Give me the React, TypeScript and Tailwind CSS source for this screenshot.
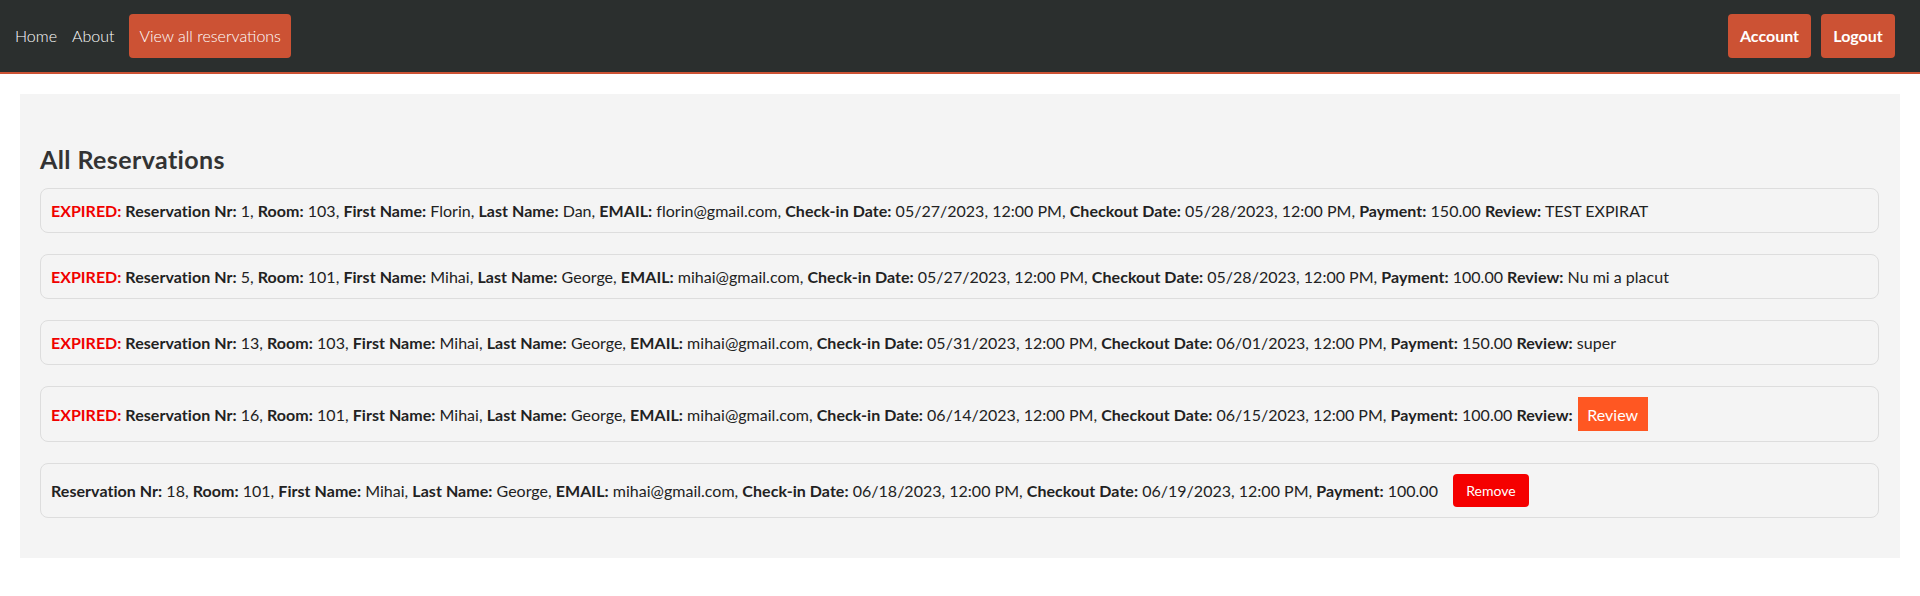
import React from "react";

type Field = { label: string; value: string };

const rows: { expired: boolean; fields: Field[]; action?: "review" | "remove" }[] = [
  {
    expired: true,
    fields: [
      { label: "Reservation Nr:", value: "1," },
      { label: "Room:", value: "103," },
      { label: "First Name:", value: "Florin," },
      { label: "Last Name:", value: "Dan," },
      { label: "EMAIL:", value: "florin@gmail.com," },
      { label: "Check-in Date:", value: "05/27/2023, 12:00 PM," },
      { label: "Checkout Date:", value: "05/28/2023, 12:00 PM," },
      { label: "Payment:", value: "150.00" },
      { label: "Review:", value: "TEST EXPIRAT" },
    ],
  },
  {
    expired: true,
    fields: [
      { label: "Reservation Nr:", value: "5," },
      { label: "Room:", value: "101," },
      { label: "First Name:", value: "Mihai," },
      { label: "Last Name:", value: "George," },
      { label: "EMAIL:", value: "mihai@gmail.com," },
      { label: "Check-in Date:", value: "05/27/2023, 12:00 PM," },
      { label: "Checkout Date:", value: "05/28/2023, 12:00 PM," },
      { label: "Payment:", value: "100.00" },
      { label: "Review:", value: "Nu mi a placut" },
    ],
  },
  {
    expired: true,
    fields: [
      { label: "Reservation Nr:", value: "13," },
      { label: "Room:", value: "103," },
      { label: "First Name:", value: "Mihai," },
      { label: "Last Name:", value: "George," },
      { label: "EMAIL:", value: "mihai@gmail.com," },
      { label: "Check-in Date:", value: "05/31/2023, 12:00 PM," },
      { label: "Checkout Date:", value: "06/01/2023, 12:00 PM," },
      { label: "Payment:", value: "150.00" },
      { label: "Review:", value: "super" },
    ],
  },
  {
    expired: true,
    action: "review",
    fields: [
      { label: "Reservation Nr:", value: "16," },
      { label: "Room:", value: "101," },
      { label: "First Name:", value: "Mihai," },
      { label: "Last Name:", value: "George," },
      { label: "EMAIL:", value: "mihai@gmail.com," },
      { label: "Check-in Date:", value: "06/14/2023, 12:00 PM," },
      { label: "Checkout Date:", value: "06/15/2023, 12:00 PM," },
      { label: "Payment:", value: "100.00" },
      { label: "Review:", value: "" },
    ],
  },
  {
    expired: false,
    action: "remove",
    fields: [
      { label: "Reservation Nr:", value: "18," },
      { label: "Room:", value: "101," },
      { label: "First Name:", value: "Mihai," },
      { label: "Last Name:", value: "George," },
      { label: "EMAIL:", value: "mihai@gmail.com," },
      { label: "Check-in Date:", value: "06/18/2023, 12:00 PM," },
      { label: "Checkout Date:", value: "06/19/2023, 12:00 PM," },
      { label: "Payment:", value: "100.00" },
    ],
  },
];

export default function App() {
  return (
    <div className="min-h-[596px] bg-white font-['Lato','Liberation_Sans',sans-serif] text-[16px] text-[#222]">
      <nav className="flex h-[74px] items-center justify-between border-b-2 border-[#cc5234] bg-[#2b2f2e] pl-[15px] pr-[25px]">
        <div className="flex items-center gap-[15px] font-light text-white">
          <a className="leading-[20px]">Home</a>
          <a className="leading-[20px]">About</a>
          <a className="flex h-[44px] items-center rounded-[4px] bg-[#cc5234] px-[10px] leading-[20px]">
            View all reservations
          </a>
        </div>
        <div className="flex items-center gap-[10px] font-bold text-white">
          <a className="flex h-[44px] w-[83px] items-center justify-center rounded-[4px] bg-[#cc5234]">Account</a>
          <a className="flex h-[44px] w-[74px] items-center justify-center rounded-[4px] bg-[#cc5234]">Logout</a>
        </div>
      </nav>

      <main className="mx-[20px] mt-[20px] bg-[#f4f4f4] pl-[20px] pr-[21px] pt-[20px] pb-[40px]">
        <h2 className="mt-[31px] mb-[14px] text-[25px] font-bold leading-[29px] tracking-[0.4px] text-[#333]">
          All Reservations
        </h2>
        <div className="flex flex-col gap-[21px]">
          {rows.map((r, i) => (
            <div
              key={i}
              className="flex items-center rounded-[8px] border border-[#dddddd] px-[10px] py-[10px] leading-[23px]"
            >
              <span className="font-normal tracking-[0.01px]">
                {r.expired && <span className="font-bold text-[#f00000]">EXPIRED: </span>}
                {r.fields.map((f, j) => (
                  <React.Fragment key={j}>
                    <b className="font-bold tracking-[0.05px]">{f.label}</b>
                    {f.value ? ` ${f.value}` : ""}
                    {j < r.fields.length - 1 ? " " : ""}
                  </React.Fragment>
                ))}
              </span>
              {r.action === "review" && (
                <button className="ml-[5px] h-[34px] w-[70px] bg-[#ff5722] font-normal text-white">
                  Review
                </button>
              )}
              {r.action === "remove" && (
                <button className="ml-[15px] h-[33px] w-[76px] rounded-[4px] bg-[#f50000] text-[14px] text-white">
                  Remove
                </button>
              )}
            </div>
          ))}
        </div>
      </main>
    </div>
  );
}
